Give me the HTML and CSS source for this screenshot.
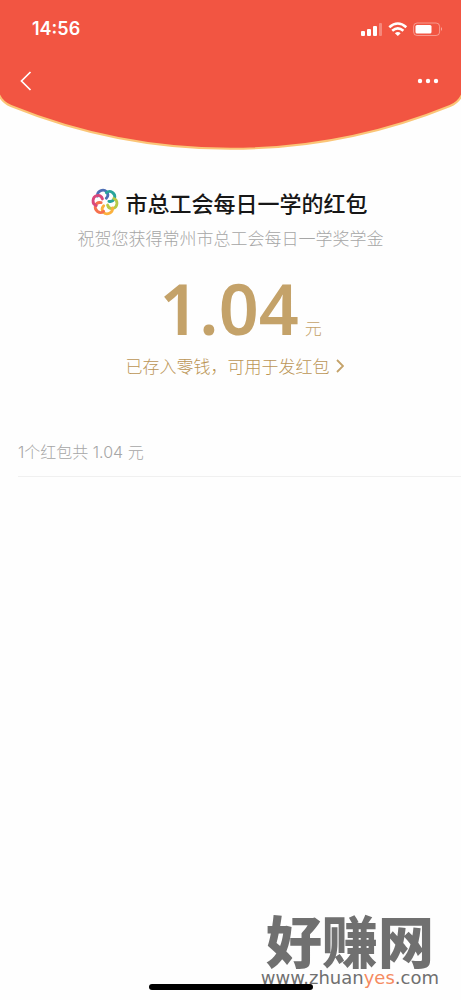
FILE: index.html
```html
<!DOCTYPE html>
<html lang="zh-CN">
<head>
<meta charset="utf-8">
<meta name="viewport" content="width=device-width, initial-scale=1">
<title>红包</title>
<link rel="stylesheet" href="styles.css">
</head>
<body>
<div class="page">
  <header class="header">
    <svg class="header-bg" viewBox="0 0 461 150" preserveAspectRatio="none" aria-hidden="true">
      <path d="M-2-2V92C0 99 4 103 11 106A584 584 0 0 0 450 106C457 103 461 99 463 92V-2Z" fill="#f25542" stroke="#fbc577" stroke-width="2"/>
    </svg>
    <div class="status">
      <span class="time">14:56</span>
      <svg class="status-icons" viewBox="0 0 83 16" aria-hidden="true">
        <g fill="#fff">
          <rect x="0" y="10" width="4" height="5" rx="1"/>
          <rect x="6" y="8" width="4" height="7" rx="1"/>
          <rect x="12" y="5" width="4" height="10" rx="1"/>
          <rect x="18" y="2" width="3" height="13" rx="1" opacity=".3"/>
          <path d="M36.800 15L33.900 12.200Q36.800 10 39.700 12.200Z"/>
        </g>
        <g fill="none" stroke="#fff" stroke-width="2.600">
          <path d="M28.300 6.300Q36.800-1.300 45.300 6.300"/>
          <path d="M31.200 9.700Q36.800 5 42.400 9.700"/>
        </g>
        <rect x="52.600" y="2" width="26" height="12.500" rx="3.500" fill="none" stroke="#fff" opacity=".4"/>
        <rect x="54.500" y="4" width="16" height="8.500" rx="1.500" fill="#fff"/>
        <path d="M80 6Q82 8 80 10Z" fill="#fff" opacity=".5"/>
      </svg>
    </div>
    <nav class="nav">
      <button class="icon-button" type="button" aria-label="返回">
        <svg class="back" viewBox="0 0 12 20"><path d="M10.500 1L1.500 10L10.500 19" fill="none" stroke="#fff" stroke-width="1.700"/></svg>
      </button>
      <button class="icon-button" type="button" aria-label="更多">
        <svg class="more" viewBox="0 0 22 6" fill="#fff"><circle cx="3" cy="3" r="2.200"/><circle cx="11" cy="3" r="2.200"/><circle cx="19" cy="3" r="2.200"/></svg>
      </button>
    </nav>
  </header>

  <main class="main">
    <section class="summary">
      <h1 class="title">
        <svg class="logo" viewBox="-14 -14 28 28" fill="none" stroke-width="2.800" stroke-linecap="round" aria-hidden="true">
          <path stroke="#4d6fb5" transform="rotate(-20)" d="M-5-8C-4-13 3-13.500 5-9C6-6 4.500-4 2.500-3"/>
          <path stroke="#28a49b" transform="rotate(40)" d="M-5-8C-4-13 3-13.500 5-9C6-6 4.500-4 2.500-3"/>
          <path stroke="#b8c945" transform="rotate(100)" d="M-5-8C-4-13 3-13.500 5-9C6-6 4.500-4 2.500-3"/>
          <path stroke="#fbb13d" transform="rotate(160)" d="M-5-8C-4-13 3-13.500 5-9C6-6 4.500-4 2.500-3"/>
          <path stroke="#f5704d" transform="rotate(220)" d="M-5-8C-4-13 3-13.500 5-9C6-6 4.500-4 2.500-3"/>
          <path stroke="#d9487c" transform="rotate(280)" d="M-5-8C-4-13 3-13.500 5-9C6-6 4.500-4 2.500-3"/>
        </svg>
        <span>市总工会每日一学的红包</span>
      </h1>
      <p class="wish">祝贺您获得常州市总工会每日一学奖学金</p>
      <p class="amount"><span class="number">1.04</span><span class="unit">元</span></p>
      <a class="wallet" href="#">
        <span>已存入零钱，可用于发红包</span>
        <svg class="chevron" viewBox="0 0 8 14" aria-hidden="true"><path d="M1 1L7 7L1 13" fill="none" stroke="#c4a269" stroke-width="1.800"/></svg>
      </a>
    </section>
    <p class="count">1个红包共 1.04 元</p>
  </main>

  <div class="home-indicator"></div>
  <div class="watermark">
    <span class="mark-name">好赚网</span>
    <span class="mark-url">www.zhuan<span class="mark-accent">yes</span>.com</span>
  </div>
</div>
</body>
</html>
```
FILE: styles.css
```css
* { box-sizing: border-box; }

body {
  margin: 0;
  background: #fefefe;
  font-family: "Noto Sans CJK SC", sans-serif;
}

h1, p { margin: 0; }

.page {
  position: relative;
  display: flex;
  flex-direction: column;
  min-height: 100vh;
}

.header {
  position: relative;
  height: 150px;
  padding-top: 17px;
}

.header-bg {
  position: absolute;
  inset: 0;
  width: 100%;
  height: 100%;
}

.status, .nav {
  position: relative;
  display: flex;
  align-items: center;
  justify-content: space-between;
}

.status {
  height: 24px;
  padding: 0 17px 0 32px;
}

.time {
  color: #fff;
  font: 600 18px/24px Inter, sans-serif;
}

.status-icons { width: 83px; height: 16px; }

.nav {
  height: 40px;
  margin-top: 20px;
  padding: 0 12px 0 8px;
}

.icon-button {
  display: flex;
  justify-content: center;
  padding: 10px 0;
  width: 36px;
  border: 0;
  background: none;
}

.icon-button:last-child { width: 42px; }

.back { width: 12px; height: 20px; }
.more { width: 22px; height: 6px; }

.main { flex: 1; }

.summary {
  display: flex;
  flex-direction: column;
  align-items: center;
  padding-top: 36px;
}

.title {
  display: flex;
  align-items: center;
  gap: 6px;
  padding-right: 2px;
  color: #171717;
  font-size: 22px;
  font-weight: 500;
  line-height: 32px;
}

.logo { width: 28px; height: 28px; }

.wish {
  margin-top: 8px;
  color: #a6a6a6;
  font-size: 17px;
  font-weight: 300;
  line-height: 24px;
}

.amount {
  display: flex;
  align-items: baseline;
  gap: 6px;
  margin-top: 12px;
  padding-left: 20px;
  color: #c4a269;
}

.number {
  font: 600 70px/92px "Noto Sans", sans-serif;
}

.unit {
  font-size: 17px;
  font-weight: 300;
  line-height: 24px;
}

.wallet {
  display: flex;
  align-items: center;
  gap: 6px;
  padding-left: 8px;
  color: #bb9555;
  font-size: 17px;
  font-weight: 300;
  line-height: 24px;
  text-decoration: none;
}

.chevron { width: 8px; height: 14px; }

.count {
  margin: 62px 0 0 18px;
  padding-bottom: 12px;
  border-bottom: 1px solid #f0f0f0;
  color: #a6a6a6;
  font-family: Inter, "Noto Sans CJK SC", sans-serif;
  font-size: 16px;
  font-weight: 300;
  line-height: 24px;
}

.home-indicator {
  width: 164px;
  height: 6px;
  margin: 0 auto 10px;
  border-radius: 3px;
  background: #000;
}

.watermark {
  position: absolute;
  right: 22px;
  bottom: 13px;
  display: flex;
  flex-direction: column;
  align-items: center;
  color: #707070;
}

.mark-name {
  font-size: 56px;
  font-weight: 900;
  line-height: 60px;
}

.mark-url {
  font: 18px/18px "DejaVu Sans", sans-serif;
}

.mark-accent { color: #f58a61; }
```
